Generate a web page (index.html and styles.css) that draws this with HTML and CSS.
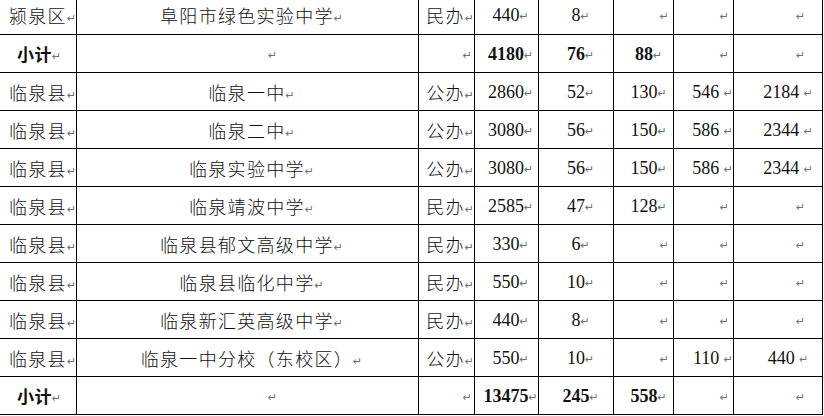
FILE: index.html
```html
<!DOCTYPE html>
<html lang="zh-CN">
<head>
<meta charset="utf-8">
<title>学校招生计划表</title>
<link rel="stylesheet" href="styles.css">
</head>
<body>
<div class="sheet">
  <div class="cell k1"><span class="t cjk">颍泉区<span class="pm">↵</span></span></div>
  <div class="cell k2"><span class="t cjk">阜阳市绿色实验中学<span class="pm">↵</span></span></div>
  <div class="cell k3"><span class="t cjk">民办<span class="pm">↵</span></span></div>
  <div class="cell k4"><span class="t">440<span class="pm">↵</span></span></div>
  <div class="cell k5"><span class="t">8<span class="pm">↵</span></span></div>
  <div class="cell k6 empty"><span class="t"><span class="pm">↵</span></span></div>
  <div class="cell k7 empty"><span class="t"><span class="pm">↵</span></span></div>
  <div class="cell k8 empty"><span class="t"><span class="pm">↵</span></span></div>

  <div class="cell k1 sub"><span class="t cjkb">小计<span class="pm">↵</span></span></div>
  <div class="cell k2 empty"><span class="t"><span class="pm">↵</span></span></div>
  <div class="cell k3 empty"><span class="t"><span class="pm">↵</span></span></div>
  <div class="cell k4"><span class="t b">4180<span class="pm">↵</span></span></div>
  <div class="cell k5"><span class="t b">76<span class="pm">↵</span></span></div>
  <div class="cell k6"><span class="t b">88<span class="pm">↵</span></span></div>
  <div class="cell k7 empty"><span class="t"><span class="pm">↵</span></span></div>
  <div class="cell k8 empty"><span class="t"><span class="pm">↵</span></span></div>

  <div class="cell k1"><span class="t cjk">临泉县<span class="pm">↵</span></span></div>
  <div class="cell k2"><span class="t cjk">临泉一中<span class="pm">↵</span></span></div>
  <div class="cell k3"><span class="t cjk">公办<span class="pm">↵</span></span></div>
  <div class="cell k4"><span class="t">2860<span class="pm">↵</span></span></div>
  <div class="cell k5"><span class="t">52<span class="pm">↵</span></span></div>
  <div class="cell k6"><span class="t">130<span class="pm">↵</span></span></div>
  <div class="cell k7"><span class="t">546 <span class="pm">↵</span></span></div>
  <div class="cell k8"><span class="t">2184 <span class="pm">↵</span></span></div>

  <div class="cell k1"><span class="t cjk">临泉县<span class="pm">↵</span></span></div>
  <div class="cell k2"><span class="t cjk">临泉二中<span class="pm">↵</span></span></div>
  <div class="cell k3"><span class="t cjk">公办<span class="pm">↵</span></span></div>
  <div class="cell k4"><span class="t">3080<span class="pm">↵</span></span></div>
  <div class="cell k5"><span class="t">56<span class="pm">↵</span></span></div>
  <div class="cell k6"><span class="t">150<span class="pm">↵</span></span></div>
  <div class="cell k7"><span class="t">586 <span class="pm">↵</span></span></div>
  <div class="cell k8"><span class="t">2344 <span class="pm">↵</span></span></div>

  <div class="cell k1"><span class="t cjk">临泉县<span class="pm">↵</span></span></div>
  <div class="cell k2"><span class="t cjk">临泉实验中学<span class="pm">↵</span></span></div>
  <div class="cell k3"><span class="t cjk">公办<span class="pm">↵</span></span></div>
  <div class="cell k4"><span class="t">3080<span class="pm">↵</span></span></div>
  <div class="cell k5"><span class="t">56<span class="pm">↵</span></span></div>
  <div class="cell k6"><span class="t">150<span class="pm">↵</span></span></div>
  <div class="cell k7"><span class="t">586 <span class="pm">↵</span></span></div>
  <div class="cell k8"><span class="t">2344 <span class="pm">↵</span></span></div>

  <div class="cell k1"><span class="t cjk">临泉县<span class="pm">↵</span></span></div>
  <div class="cell k2"><span class="t cjk">临泉靖波中学<span class="pm">↵</span></span></div>
  <div class="cell k3"><span class="t cjk">民办<span class="pm">↵</span></span></div>
  <div class="cell k4"><span class="t">2585<span class="pm">↵</span></span></div>
  <div class="cell k5"><span class="t">47<span class="pm">↵</span></span></div>
  <div class="cell k6"><span class="t">128<span class="pm">↵</span></span></div>
  <div class="cell k7 empty"><span class="t"><span class="pm">↵</span></span></div>
  <div class="cell k8 empty"><span class="t"><span class="pm">↵</span></span></div>

  <div class="cell k1"><span class="t cjk">临泉县<span class="pm">↵</span></span></div>
  <div class="cell k2"><span class="t cjk">临泉县郁文高级中学<span class="pm">↵</span></span></div>
  <div class="cell k3"><span class="t cjk">民办<span class="pm">↵</span></span></div>
  <div class="cell k4"><span class="t">330<span class="pm">↵</span></span></div>
  <div class="cell k5"><span class="t">6<span class="pm">↵</span></span></div>
  <div class="cell k6 empty"><span class="t"><span class="pm">↵</span></span></div>
  <div class="cell k7 empty"><span class="t"><span class="pm">↵</span></span></div>
  <div class="cell k8 empty"><span class="t"><span class="pm">↵</span></span></div>

  <div class="cell k1"><span class="t cjk">临泉县<span class="pm">↵</span></span></div>
  <div class="cell k2"><span class="t cjk">临泉县临化中学<span class="pm">↵</span></span></div>
  <div class="cell k3"><span class="t cjk">民办<span class="pm">↵</span></span></div>
  <div class="cell k4"><span class="t">550<span class="pm">↵</span></span></div>
  <div class="cell k5"><span class="t">10<span class="pm">↵</span></span></div>
  <div class="cell k6 empty"><span class="t"><span class="pm">↵</span></span></div>
  <div class="cell k7 empty"><span class="t"><span class="pm">↵</span></span></div>
  <div class="cell k8 empty"><span class="t"><span class="pm">↵</span></span></div>

  <div class="cell k1"><span class="t cjk">临泉县<span class="pm">↵</span></span></div>
  <div class="cell k2"><span class="t cjk">临泉新汇英高级中学<span class="pm">↵</span></span></div>
  <div class="cell k3"><span class="t cjk">民办<span class="pm">↵</span></span></div>
  <div class="cell k4"><span class="t">440<span class="pm">↵</span></span></div>
  <div class="cell k5"><span class="t">8<span class="pm">↵</span></span></div>
  <div class="cell k6 empty"><span class="t"><span class="pm">↵</span></span></div>
  <div class="cell k7 empty"><span class="t"><span class="pm">↵</span></span></div>
  <div class="cell k8 empty"><span class="t"><span class="pm">↵</span></span></div>

  <div class="cell k1"><span class="t cjk">临泉县<span class="pm">↵</span></span></div>
  <div class="cell k2"><span class="t cjk">临泉一中分校（东校区）<span class="pm">↵</span></span></div>
  <div class="cell k3"><span class="t cjk">公办<span class="pm">↵</span></span></div>
  <div class="cell k4"><span class="t">550<span class="pm">↵</span></span></div>
  <div class="cell k5"><span class="t">10<span class="pm">↵</span></span></div>
  <div class="cell k6 empty"><span class="t"><span class="pm">↵</span></span></div>
  <div class="cell k7"><span class="t">110 <span class="pm">↵</span></span></div>
  <div class="cell k8"><span class="t">440 <span class="pm">↵</span></span></div>

  <div class="cell k1 sub"><span class="t cjkb">小计<span class="pm">↵</span></span></div>
  <div class="cell k2 empty"><span class="t"><span class="pm">↵</span></span></div>
  <div class="cell k3 empty"><span class="t"><span class="pm">↵</span></span></div>
  <div class="cell k4"><span class="t b">13475<span class="pm">↵</span></span></div>
  <div class="cell k5"><span class="t b">245<span class="pm">↵</span></span></div>
  <div class="cell k6"><span class="t b">558<span class="pm">↵</span></span></div>
  <div class="cell k7 empty"><span class="t"><span class="pm">↵</span></span></div>
  <div class="cell k8 empty"><span class="t"><span class="pm">↵</span></span></div>
</div>
</body>
</html>
```

FILE: styles.css
```css
html, body {
  margin: 0;
  padding: 0;
  background: #ffffff;
}

body {
  overflow: hidden;
}

.sheet {
  display: grid;
  grid-template-columns: 76px 341px 55px 63px 74px 59px 59px 88px;
  grid-template-rows: 38px repeat(10, 37px);
  gap: 1px;
  width: max-content;
  margin-top: -4px;
  background: #000000;
  border-right: 1px solid #000000;
  border-bottom: 1px solid #000000;
  font-family: "Liberation Serif", "Noto Sans CJK SC", serif;
  font-size: 18px;
  color: #111111;
}

.cell {
  background: #ffffff;
  display: flex;
  align-items: center;
  justify-content: center;
  line-height: 1;
  white-space: pre;
  box-sizing: border-box;
}

.t {
  display: inline-block;
  white-space: pre;
}

.cjk {
  font-family: "Noto Sans CJK SC", sans-serif;
  font-weight: 300;
  letter-spacing: 1.3px;
}

.cjkb {
  font-family: "Noto Sans CJK SC", sans-serif;
  font-weight: 700;
  font-size: 17px;
  letter-spacing: 0.5px;
}

.b {
  font-weight: 700;
}

.pm {
  font-family: "DejaVu Sans", sans-serif;
  font-weight: 400;
  font-size: 11px;
  color: #6f6f6f;
  letter-spacing: 0;
  margin-left: 0;
  vertical-align: 1px;
}

.k1 { justify-content: flex-start; padding-left: 9px; }
.k1.sub { padding-left: 17px; }
.k2 { padding-left: 8px; }
.k2.empty { padding-left: 50px; }
.k3 { justify-content: flex-end; padding-right: 0; }
.k3.empty { padding-right: 2px; }
.k4 { padding-left: 8px; }
.k5 { padding-left: 9px; }
.k6 { padding-left: 10px; }
.k6.empty { justify-content: flex-end; padding-left: 0; padding-right: 4px; }
.k7 { justify-content: flex-end; padding-right: 0; }
.k7.empty { padding-right: 4px; }
.k8 { padding-left: 20px; }
.k8.empty { padding-left: 45px; }
```
